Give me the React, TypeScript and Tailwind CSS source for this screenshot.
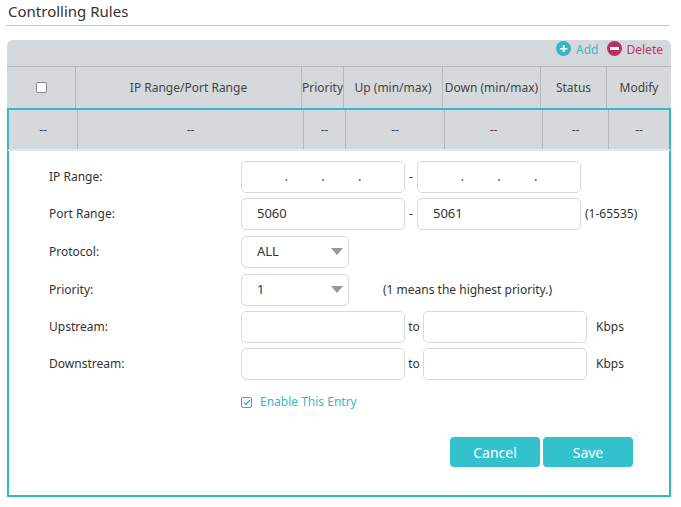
import React from "react";

const inp = "h-[32px] rounded-[5px] border border-[#d9d9d9] bg-white text-[13px] text-[#333] flex items-center";

function Row({ label, children, mt }: { label: string; children: React.ReactNode; mt: string }) {
  return (
    <div className={`flex items-center ${mt}`}>
      <div className="w-[192px] text-[12px] text-[#333]">{label}</div>
      {children}
    </div>
  );
}

function Caret() {
  return <svg width="12" height="8" viewBox="0 0 12 8" className="absolute right-[5px] top-[11px]"><path d="M0 0h12L6 7z" fill="#999" /></svg>;
}

export default function App() {
  const cols = [
    { w: "w-[68px]", t: "cb" },
    { w: "w-[226px]", t: "IP Range/Port Range" },
    { w: "w-[42px]", t: "Priority" },
    { w: "w-[99px]", t: "Up (min/max)" },
    { w: "w-[98px]", t: "Down (min/max)" },
    { w: "w-[66px]", t: "Status" },
    { w: "flex-1", t: "Modify" },
  ];
  const ip = (
    <div className={`${inp} w-[164px] justify-around px-[26px] text-[10px]`}>
      <span>.</span><span>.</span><span>.</span>
    </div>
  );
  return (
    <div className="w-[681px] h-[507px] bg-white font-['Liberation_Sans'] text-[#333]">
      <div className="pl-[8px] pt-[2px] text-[15px] leading-[18px] text-[#333]">Controlling Rules</div>
      <div className="ml-[6px] mr-[11px] mt-[5px] border-t border-[#c8c8c8]" />
      <div className="ml-[7px] mr-[10px] mt-[14px]">
        <div className="h-[26px] bg-[#d5d9db] rounded-t-[6px] flex items-start pt-[1px] justify-end pr-[8px] text-[12px]">
          <span className="w-[15px] h-[15px] rounded-full bg-[#33b9c6] text-white flex items-center justify-center text-[15px] font-bold leading-none">+</span>
          <span className="ml-[5px] text-[#33b9c6]">Add</span>
          <span className="ml-[8px] w-[15px] h-[15px] rounded-full bg-[#b83267] flex items-center justify-center"><span className="w-[9px] h-[3px] bg-white" /></span>
          <span className="ml-[5px] text-[#b83267]">Delete</span>
        </div>
        <div className="flex h-[42px] bg-[#d5d9db] border-t border-[#b5b9bb] text-[12px] text-[#444]">
          {cols.map((c, i) => (
            <div key={i} className={`${c.w} ${i ? "border-l border-[#b5b9bb]" : ""} flex items-center justify-center`}>
              {c.t === "cb" ? <span className="w-[11px] h-[11px] border border-[#888] rounded-[2px] bg-white" /> : c.t}
            </div>
          ))}
        </div>
        <div className="flex h-[43px] bg-[#d5d9db] border-2 border-[#33b9c6] border-b-[#e5e8ea] text-[12px] text-[#444]">
          {cols.map((c, i) => (
            <div key={i} className={`${c.w} ${i ? "border-l border-[#b5b9bb]" : ""} flex items-center justify-center`}>--</div>
          ))}
        </div>
        <div className="h-[346px] border-2 border-t-0 border-[#33b9c6] pl-[40px] pt-[10px]">
          <Row label="IP Range:" mt="mt-[0px]">
            {ip}<span className="w-[12px] text-center text-[12px]">-</span>{ip}
          </Row>
          <Row label="Port Range:" mt="mt-[5px]">
            <div className={`${inp} w-[164px] pl-[15px]`}>5060</div>
            <span className="w-[12px] text-center text-[12px]">-</span>
            <div className={`${inp} w-[164px] pl-[15px]`}>5061</div>
            <span className="ml-[4px] text-[12px]">(1-65535)</span>
          </Row>
          <Row label="Protocol:" mt="mt-[6px]">
            <div className={`${inp} w-[108px] h-[30px] pl-[15px] relative`}>ALL<Caret /></div>
          </Row>
          <Row label="Priority:" mt="mt-[6px]">
            <div className={`${inp} w-[108px] h-[30px] pl-[15px] relative`}>1<Caret /></div>
            <span className="ml-[34px] text-[12px]">(1 means the highest priority.)</span>
          </Row>
          <Row label="Upstream:" mt="mt-[5px]">
            <div className={`${inp} w-[164px]`} /><span className="w-[18px] text-center text-[12px]">to</span>
            <div className={`${inp} w-[164px]`} /><span className="ml-[9px] text-[12px]">Kbps</span>
          </Row>
          <Row label="Downstream:" mt="mt-[5px]">
            <div className={`${inp} w-[164px]`} /><span className="w-[18px] text-center text-[12px]">to</span>
            <div className={`${inp} w-[164px]`} /><span className="ml-[9px] text-[12px]">Kbps</span>
          </Row>
          <div className="flex items-center ml-[192px] mt-[13px] text-[12px] text-[#33b9c6]">
            <span className="w-[11px] h-[11px] border border-[#888] rounded-[2px] flex items-center justify-center">
              <svg width="8" height="7" viewBox="0 0 8 7"><path d="M1 3.5l2 2L7 1" stroke="#33b9c6" strokeWidth="1.5" fill="none" /></svg>
            </span>
            <span className="ml-[8px]">Enable This Entry</span>
          </div>
          <div className="flex ml-[401px] mt-[26px] gap-[3px]">
            <button className="w-[90px] h-[30px] rounded-[4px] bg-[#33c1cd] text-white text-[14px]">Cancel</button>
            <button className="w-[90px] h-[30px] rounded-[4px] bg-[#33c1cd] text-white text-[14px]">Save</button>
          </div>
        </div>
      </div>
    </div>
  );
}
